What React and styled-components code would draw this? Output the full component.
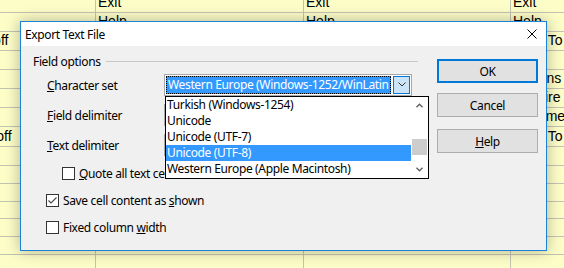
import styled, { createGlobalStyle } from "styled-components";

const GlobalStyle = createGlobalStyle`
  html, body {
    margin: 0;
    padding: 0;
  }
  body {
    width: 564px;
    height: 268px;
    overflow: hidden;
    background: #fdfdc8;
  }
`;

const Screen = styled.div`
  position: relative;
  width: 564px;
  height: 268px;
  overflow: hidden;
  background: #fdfdc8;
  font-family: "Liberation Sans", Arial, sans-serif;
`;

// spreadsheet behind the dialog
const Sheet = styled.div`
  display: grid;
  grid-template-columns: 150px 208px 207px 207px;
  grid-template-rows: 19px 19px 19px 19px 19px 19px 19px 20px 19px 18px 18px 17px 18px 18px 19px;
  margin-left: -54px;
  margin-top: -6px;
`;

const Cell = styled.div`
  display: flex;
  align-items: flex-end;
  padding: 0 2px 2px;
  border-right: 1px solid #c3c3b4;
  border-bottom: 1px solid #c3c3b4;
  font-size: 14px;
  line-height: 16px;
  color: #000;
  white-space: nowrap;
  overflow: hidden;
`;

const Dialog = styled.div`
  position: absolute;
  left: 20px;
  top: 21px;
  width: 527px;
  height: 230px;
  box-sizing: border-box;
  border: 1px solid #1883d7;
  background: #f0f0f0;
  box-shadow: 0 0 14px rgba(0, 0, 0, 0.3);
  display: flex;
  flex-direction: column;
  font-family: "Noto Sans", "Segoe UI", sans-serif;
  font-size: 12px;
  letter-spacing: -0.35px;
  color: #000;
`;

const TitleBar = styled.div`
  height: 24px;
  flex-shrink: 0;
  background: #fff;
  display: flex;
  align-items: center;
  justify-content: space-between;
  padding: 0 9px 0 4px;
`;

const Body = styled.div`
  flex: 1;
  display: flex;
  padding: 7px 8px 0 12px;
`;

const Main = styled.div`
  width: 385px;
  display: flex;
  flex-direction: column;
`;

const FrameHeader = styled.div`
  height: 16px;
  display: flex;
  align-items: center;
  gap: 5px;
  margin-bottom: 1px;
  &::after {
    content: "";
    flex: 1;
    height: 1px;
    background: #c8c8c8;
  }
`;

const FieldRow = styled.div`
  height: 30px;
  display: flex;
  align-items: center;
  padding-left: 14px;
`;

const Label = styled.div`
  width: 117px;
`;

const Combo = styled.div`
  position: relative;
  width: 248px;
  height: 22px;
  margin-top: -1px;
  box-sizing: border-box;
  border: 1px solid #a8a8a8;
  background: #fff;
  padding: 1px;
  display: flex;
  gap: 2px;
`;

const ComboText = styled.div`
  flex: 1;
  box-sizing: border-box;
  padding-left: 1px;
  line-height: 16px;
  white-space: nowrap;
  overflow: hidden;
  background: ${(p) => (p.$focused ? "#3399ff" : "transparent")};
  color: ${(p) => (p.$focused ? "#fff" : "#000")};
  border: 1px dotted ${(p) => (p.$focused ? "#000" : "transparent")};
`;

const ComboButton = styled.div`
  width: 17px;
  box-sizing: border-box;
  border: 1px solid ${(p) => (p.$focused ? "#0078d7" : "transparent")};
  background: ${(p) => (p.$focused ? "#cce4f7" : "transparent")};
  display: flex;
  align-items: center;
  justify-content: center;
`;

const DropList = styled.div`
  position: absolute;
  top: 21px;
  left: 0;
  z-index: 2;
  width: 264px;
  height: 83px;
  box-sizing: border-box;
  border: 1px solid #000;
  background: #fff;
  display: flex;
`;

const Options = styled.div`
  flex: 1;
  display: flex;
  flex-direction: column;
`;

const Option = styled.div`
  height: 16px;
  line-height: 16px;
  padding-left: 1px;
  white-space: nowrap;
  overflow: hidden;
  background: ${(p) => (p.$selected ? "#3399ff" : "transparent")};
  color: ${(p) => (p.$selected ? "#fff" : "#000")};
`;

const ScrollBar = styled.div`
  width: 17px;
  display: flex;
  flex-direction: column;
  background: #fff;
`;

const ScrollArrow = styled.div`
  height: 17px;
  display: flex;
  align-items: center;
  justify-content: center;
`;

const ScrollTrack = styled.div`
  flex: 1;
`;

const Thumb = styled.div`
  width: 15px;
  height: 16px;
  margin: 25px 1px 0;
  background: #cdcdcd;
`;

const CheckRow = styled.div`
  height: 27px;
  display: flex;
  align-items: center;
  gap: 4px;
  padding-left: ${(p) => (p.$indent ? "29px" : "13px")};
`;

const Box = styled.div`
  width: 13px;
  height: 13px;
  box-sizing: border-box;
  border: 1px solid #333;
  background: #fff;
  display: flex;
  align-items: center;
  justify-content: center;
`;

const ButtonColumn = styled.div`
  margin-left: auto;
  padding-top: 6px;
  display: flex;
  flex-direction: column;
  gap: 10px;
`;

const Button = styled.div`
  width: 101px;
  height: 24px;
  box-sizing: border-box;
  border: ${(p) => (p.$default ? "2px solid #0078d7" : "1px solid #adadad")};
  background: #e1e1e1;
  display: flex;
  align-items: center;
  justify-content: center;
  margin-top: ${(p) => (p.$gapTop ? "2px" : "0")};
`;

const sheetRows = [
  ["", "Exit", "Exit", "Exit"],
  ["", "Help", "Help", "Help"],
  ["Switch off", "", "", "Back To"],
  ["", "", "", ""],
  ["", "", "", "Options"],
  ["", "", "", "Acquire"],
  ["", "", "", "Resume"],
  ["Sound: off", "", "", "Back To"],
  ["", "", "", ""],
  ["", "", "", ""],
  ["", "", "", ""],
  ["", "", "", ""],
  ["", "", "", ""],
  ["", "", "", ""],
  ["", "", "", ""],
];

const charsets = [
  "Turkish (Windows-1254)",
  "Unicode",
  "Unicode (UTF-7)",
  "Unicode (UTF-8)",
  "Western Europe (Apple Macintosh)",
];

const Chevron = ({ up, color = "#606060", w = 7, sw = 1.6 }) => (
  <svg width={w} height="5" viewBox="0 0 8 5">
    <polyline
      points={up ? "0.5,4.5 4,1 7.5,4.5" : "0.5,0.5 4,4 7.5,0.5"}
      fill="none"
      stroke={color}
      strokeWidth={sw}
    />
  </svg>
);

const CloseIcon = () => (
  <svg width="10" height="10" viewBox="0 0 10 10">
    <path d="M0.5 0.5 L9.5 9.5 M9.5 0.5 L0.5 9.5" stroke="#000" strokeWidth="1" />
  </svg>
);

const Check = () => (
  <svg width="11" height="11" viewBox="0 0 11 11">
    <polyline points="1.5,5.5 4,8 9.5,2.5" fill="none" stroke="#4a4a4a" strokeWidth="1.2" />
  </svg>
);

const App = () => {
  return (
    <Screen>
      <GlobalStyle />
      <Sheet>
        {sheetRows.map((row, r) =>
          row.map((text, c) => <Cell key={r + "-" + c}>{text}</Cell>)
        )}
      </Sheet>

      <Dialog>
        <TitleBar>
          <span>Export Text File</span>
          <CloseIcon />
        </TitleBar>
        <Body>
          <Main>
            <FrameHeader>Field options</FrameHeader>
            <FieldRow>
              <Label><u>C</u>haracter set</Label>
              <Combo>
                <ComboText $focused>Western Europe (Windows-1252/WinLatin 1)</ComboText>
                <ComboButton $focused>
                  <Chevron color="#333" w={8} sw={1} />
                </ComboButton>
                <DropList>
                  <Options>
                    {charsets.map((name) => (
                      <Option key={name} $selected={name === "Unicode (UTF-8)"}>
                        {name}
                      </Option>
                    ))}
                  </Options>
                  <ScrollBar>
                    <ScrollArrow><Chevron up /></ScrollArrow>
                    <ScrollTrack><Thumb /></ScrollTrack>
                    <ScrollArrow><Chevron /></ScrollArrow>
                  </ScrollBar>
                </DropList>
              </Combo>
            </FieldRow>
            <FieldRow>
              <Label><u>F</u>ield delimiter</Label>
              <Combo>
                <ComboText />
                <ComboButton />
              </Combo>
            </FieldRow>
            <FieldRow>
              <Label><u>T</u>ext delimiter</Label>
              <Combo>
                <ComboText />
                <ComboButton />
              </Combo>
            </FieldRow>
            <CheckRow $indent>
              <Box />
              <span><u>Q</u>uote all text cells</span>
            </CheckRow>
            <CheckRow>
              <Box><Check /></Box>
              <span>Save cell content as <u>s</u>hown</span>
            </CheckRow>
            <CheckRow>
              <Box />
              <span>Fixed column <u>w</u>idth</span>
            </CheckRow>
          </Main>
          <ButtonColumn>
            <Button $default>OK</Button>
            <Button>Cancel</Button>
            <Button $gapTop><span><u>H</u>elp</span></Button>
          </ButtonColumn>
        </Body>
      </Dialog>
    </Screen>
  );
};

export default App;
